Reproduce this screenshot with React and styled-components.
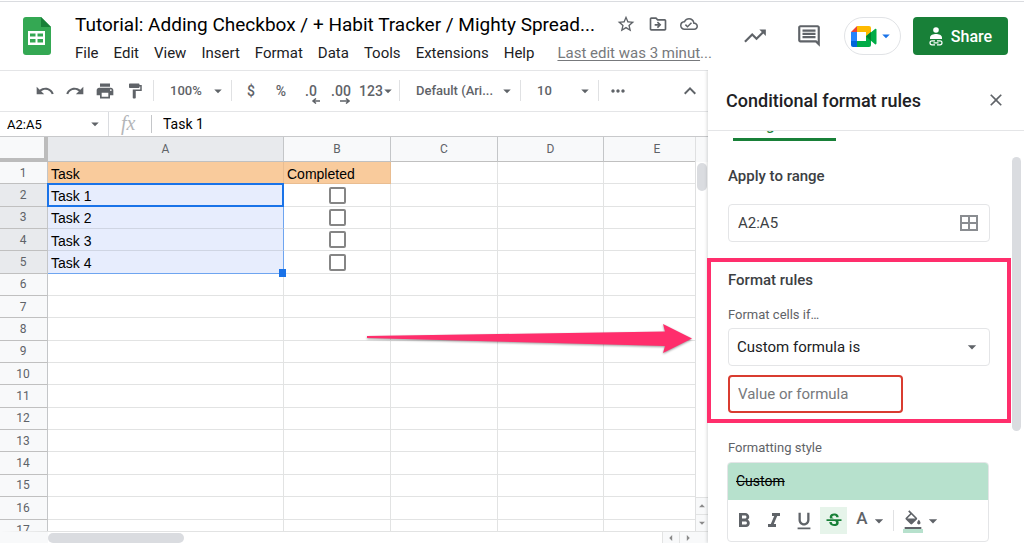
import { useState } from "react";
import styled, { createGlobalStyle } from "styled-components";
import {
  MdArrowDropDown,
  MdArrowDropUp,
  MdArrowLeft,
  MdArrowRight,
  MdClose,
  MdFormatBold,
  MdFormatColorFill,
  MdFormatItalic,
  MdFormatPaint,
  MdFormatUnderlined,
  MdKeyboardArrowUp,
  MdMoreHoriz,
  MdOutlineCloudDone,
  MdOutlineDriveFileMove,
  MdOutlineInsertComment,
  MdPrint,
  MdRedo,
  MdStarOutline,
  MdStrikethroughS,
  MdTrendingUp,
  MdUndo,
} from "react-icons/md";

const menus = [
  "File",
  "Edit",
  "View",
  "Insert",
  "Format",
  "Data",
  "Tools",
  "Extensions",
  "Help",
];

const columns = ["A", "B", "C", "D", "E"];
const rowNumbers = Array.from({ length: 17 }, (_, i) => i + 1);
const labels = { 1: "Task", 2: "Task 1", 3: "Task 2", 4: "Task 3", 5: "Task 4" };

const SheetsLogo = () => (
  <svg width="28" height="38" viewBox="0 0 28 38" aria-hidden="true">
    <path
      d="M3 0h15l10 10v25a3 3 0 0 1-3 3H3a3 3 0 0 1-3-3V3a3 3 0 0 1 3-3z"
      fill="#34a853"
    />
    <path d="M18 0l10 10H18z" fill="#188038" />
    <path
      d="M5 14h17v14H5zM7 16.500v3h5.500v-3zM14.500 16.500v3H20v-3zM7 22v3.500h5.500V22zM14.500 22v3.500H20V22z"
      fill="#fff"
      fillRule="evenodd"
    />
  </svg>
);

const MeetLogo = () => (
  <svg width="26" height="21" viewBox="0 0 26 21" aria-hidden="true">
    <path d="M0 6l6-6v6z" fill="#ea4335" />
    <path d="M0 6h6v9H0z" fill="#2684fc" />
    <path d="M0 15h6v6H2a2 2 0 0 1-2-2z" fill="#0066da" />
    <path d="M6 0h12a2 2 0 0 1 2 2v5l-5 4V6H6z" fill="#ffba00" />
    <path d="M6 15h9v-5l5-4v13a2 2 0 0 1-2 2H6z" fill="#00ac47" />
    <path d="M15 10.500L24 3c.600-.500 1.500-.200 1.500.600v14c0 .800-.900 1.100-1.500.600z" fill="#00ac47" />
    <path d="M15 10.500L20 6.300v8.500z" fill="#00832d" />
  </svg>
);

const ShareIcon = () => (
  <svg width="14" height="19" viewBox="0 0 14 19" aria-hidden="true">
    <circle cx="7" cy="3" r="2.800" fill="#fff" />
    <path d="M1 12v-1.500C1 8 4.500 7 7 7s6 1 6 3.500V12z" fill="#fff" />
    <path
      d="M6 13.800H3a2 2 0 0 0 0 4h3M8 13.800h3a2 2 0 0 1 0 4H8M4.500 15.800h5"
      stroke="#fff"
      strokeWidth="1.200"
      fill="none"
    />
  </svg>
);

const DecimalIcon = ({ more }) => (
  <svg width="18" height="6" viewBox="0 0 18 6" aria-hidden="true">
    <path
      d={more ? "M8 3h9M14 0.500L17 3l-3 2.500" : "M18 3h-7M14 0.500L11 3l3 2.500"}
      stroke="currentColor"
      strokeWidth="1.500"
      fill="none"
    />
  </svg>
);

const RangeIcon = () => (
  <svg width="18" height="16" viewBox="0 0 18 16" aria-hidden="true">
    <path
      d="M1 1h16v14H1zM9 1v14M1 8h16"
      fill="none"
      stroke="#8a8d91"
      strokeWidth="2"
    />
  </svg>
);

const Dropdown = ({ label, value, width }) => (
  <DropdownWrap $width={width}>
    <ToolbarSelect aria-label={label} defaultValue={value}>
      <option>{value}</option>
    </ToolbarSelect>
    <Caret size={18} />
  </DropdownWrap>
);

const Header = () => (
  <HeaderBar>
    <SheetsLogo />
    <HeaderText>
      <TitleRow>
        <Title>Tutorial: Adding Checkbox / + Habit Tracker / Mighty Spread...</Title>
        <TitleActions>
          <IconButton aria-label="Star">
            <MdStarOutline size={20} />
          </IconButton>
          <IconButton aria-label="Move">
            <MdOutlineDriveFileMove size={20} />
          </IconButton>
          <IconButton aria-label="See document status">
            <MdOutlineCloudDone size={18} />
          </IconButton>
        </TitleActions>
      </TitleRow>
      <MenuRow>
        {menus.map((menu) => (
          <MenuButton key={menu}>{menu}</MenuButton>
        ))}
        <LastEdit href="#history">
          <u>Last edit was 3 minut</u>...
        </LastEdit>
      </MenuRow>
    </HeaderText>
    <HeaderActions>
      <IconButton aria-label="Activity dashboard">
        <MdTrendingUp size={26} />
      </IconButton>
      <IconButton aria-label="Open comment history">
        <MdOutlineInsertComment size={26} />
      </IconButton>
      <MeetButton aria-label="Join a call">
        <MeetLogo />
        <MdArrowDropDown size={18} />
      </MeetButton>
      <ShareButton>
        <ShareIcon />
        Share
      </ShareButton>
    </HeaderActions>
  </HeaderBar>
);

const Toolbar = () => (
  <ToolbarRow>
    <ToolButton aria-label="Undo">
      <MdUndo size={20} />
    </ToolButton>
    <ToolButton aria-label="Redo">
      <MdRedo size={20} />
    </ToolButton>
    <ToolButton aria-label="Print">
      <MdPrint size={20} />
    </ToolButton>
    <ToolButton aria-label="Paint format">
      <MdFormatPaint size={18} />
    </ToolButton>
    <Separator />
    <Dropdown label="Zoom" value="100%" width="77px" />
    <Separator />
    <ToolButton>$</ToolButton>
    <ToolButton>%</ToolButton>
    <DecimalButton>
      .0
      <DecimalIcon />
    </DecimalButton>
    <DecimalButton>
      .00
      <DecimalIcon more />
    </DecimalButton>
    <FormatButton>
      123
      <MdArrowDropDown size={18} />
    </FormatButton>
    <Separator />
    <Dropdown label="Font" value="Default (Ari..." width="120px" />
    <Separator />
    <Dropdown label="Font size" value="10" width="77px" />
    <Separator />
    <ToolButton aria-label="More">
      <MdMoreHoriz size={20} />
    </ToolButton>
    <CollapseButton aria-label="Hide the menus">
      <MdKeyboardArrowUp size={24} />
    </CollapseButton>
  </ToolbarRow>
);

const Sheet = () => (
  <SheetTable>
    <colgroup>
      <Col $width="48px" />
      <Col $width="236px" />
      <Col $width="107px" />
      <Col $width="107px" />
      <Col $width="106px" />
      <Col $width="107px" />
    </colgroup>
    <thead>
      <tr>
        <Corner />
        {columns.map((column) => (
          <ColumnHead key={column} $selected={column === "A"} scope="col">
            {column}
          </ColumnHead>
        ))}
      </tr>
    </thead>
    <tbody>
      {rowNumbers.map((row) => {
        const inRange = row >= 2 && row <= 5;
        return (
          <tr key={row}>
            <RowHead $selected={inRange} scope="row">
              {row}
            </RowHead>
            <Cell
              $filled={row === 1}
              $selected={inRange}
              $active={row === 2}
              $last={row === 5}
            >
              {labels[row]}
              {row === 5 && <FillHandle />}
            </Cell>
            <Cell $filled={row === 1} $center={inRange}>
              {row === 1 && "Completed"}
              {inRange && (
                <CellCheckbox
                  type="checkbox"
                  aria-label={`${labels[row]} completed`}
                />
              )}
            </Cell>
            <Cell />
            <Cell />
            <Cell />
          </tr>
        );
      })}
    </tbody>
  </SheetTable>
);

const RulesPanel = () => {
  const [strike, setStrike] = useState(true);

  return (
    <Panel>
      <PanelHeader>
        <PanelTitle>Conditional format rules</PanelTitle>
        <IconButton aria-label="Close">
          <MdClose size={20} />
        </IconButton>
      </PanelHeader>
      <PanelBody>
        <Tab>Single color</Tab>
        <Section>
          <SectionTitle as="label" htmlFor="range">
            Apply to range
          </SectionTitle>
          <Field>
            <FieldInput id="range" defaultValue="A2:A5" />
            <FieldIcon>
              <RangeIcon />
            </FieldIcon>
          </Field>
        </Section>
        <Section>
          <SectionTitle>Format rules</SectionTitle>
          <FieldLabel htmlFor="condition">Format cells if…</FieldLabel>
          <Field>
            <FieldSelect id="condition" defaultValue="Custom formula is">
              <option>Custom formula is</option>
            </FieldSelect>
            <FieldIcon>
              <MdArrowDropDown size={20} />
            </FieldIcon>
          </Field>
          <FormulaInput placeholder="Value or formula" aria-label="Formula" />
        </Section>
        <Section>
          <StyleLabel>Formatting style</StyleLabel>
          <StyleBox>
            <StylePreview $strike={strike}>Custom</StylePreview>
            <StyleTools>
              <StyleButton aria-label="Bold">
                <MdFormatBold size={24} />
              </StyleButton>
              <StyleButton aria-label="Italic">
                <MdFormatItalic size={24} />
              </StyleButton>
              <StyleButton aria-label="Underline">
                <MdFormatUnderlined size={22} />
              </StyleButton>
              <StyleButton
                aria-label="Strikethrough"
                $on={strike}
                onClick={() => setStrike(!strike)}
              >
                <MdStrikethroughS size={20} />
              </StyleButton>
              <ColorButton aria-label="Text color">
                <ColorLetter>A</ColorLetter>
                <MdArrowDropDown size={20} />
              </ColorButton>
              <Separator />
              <ColorButton aria-label="Fill color">
                <FillSwatch>
                  <MdFormatColorFill size={20} viewBox="0 0 24 21" />
                </FillSwatch>
                <MdArrowDropDown size={20} />
              </ColorButton>
            </StyleTools>
          </StyleBox>
        </Section>
        <PanelThumb />
      </PanelBody>
    </Panel>
  );
};

const App = () => (
  <>
    <GlobalStyle />
    <Page>
      <Header />
      <Workspace>
        <Editor>
          <Toolbar />
          <FormulaBar>
            <NameBox>
              <NameInput aria-label="Name box" defaultValue="A2:A5" />
              <Caret size={18} />
            </NameBox>
            <Fx>fx</Fx>
            <ContentInput aria-label="Cell content" defaultValue="Task 1" />
          </FormulaBar>
          <SheetArea>
            <SheetViewport>
              <Sheet />
            </SheetViewport>
            <VerticalBar>
              <VerticalThumb />
              <ScrollButton aria-label="Scroll up">
                <MdArrowDropUp size={14} />
              </ScrollButton>
              <ScrollButton aria-label="Scroll down">
                <MdArrowDropDown size={14} />
              </ScrollButton>
            </VerticalBar>
            <HorizontalBar>
              <HorizontalThumb />
              <SideButton aria-label="Scroll left">
                <MdArrowLeft size={14} />
              </SideButton>
              <SideButton aria-label="Scroll right">
                <MdArrowRight size={14} />
              </SideButton>
            </HorizontalBar>
            <BarCorner />
          </SheetArea>
        </Editor>
        <RulesPanel />
        <Highlight />
        <Arrow width="326" height="32" viewBox="0 0 326 32" aria-hidden="true">
          <path
            d="M0 13L298 8.500 296 1l29 14.500L296 30l2-7L0 15z"
            fill="#ff2e6c"
          />
        </Arrow>
      </Workspace>
    </Page>
  </>
);

export default App;

const GlobalStyle = createGlobalStyle`
  * {
    box-sizing: border-box;
  }

  body {
    margin: 0;
    background: #fff;
    color: #202124;
    font-family: Roboto, sans-serif;
    overflow: hidden;
  }

  button,
  input,
  select {
    margin: 0;
    padding: 0;
    border: none;
    border-radius: 0;
    background: none;
    color: inherit;
    font-family: inherit;
    outline: none;
  }

  button {
    cursor: pointer;
  }

  svg {
    display: block;
    flex: none;
  }
`;

const Page = styled.div`
  display: flex;
  flex-direction: column;
  height: 100vh;
`;

// Header
const HeaderBar = styled.header`
  display: flex;
  align-items: flex-start;
  height: 70px;
  flex: none;
  padding: 15px 16px 0 23px;
  border-top: 1px solid #dadce0;
  border-bottom: 1px solid #e4e5e7;
  margin-top: 1px;
  margin-bottom: -1px;
`;

const HeaderText = styled.div`
  flex: 1;
  min-width: 0;
  margin: -7px 0 0 24px;
`;

const TitleRow = styled.div`
  display: flex;
  align-items: center;
  height: 28px;
  gap: 21px;
`;

const Title = styled.h1`
  margin: 0;
  font-size: 19px;
  font-weight: 400;
  color: #000;
  white-space: nowrap;
`;

const TitleActions = styled.div`
  display: flex;
  gap: 12px;
`;

const IconButton = styled.button`
  display: flex;
  align-items: center;
  color: #5f6368;
`;

const MenuRow = styled.nav`
  display: flex;
  align-items: center;
  height: 30px;
  gap: 15px;
`;

const MenuButton = styled.button`
  font-size: 15px;
  color: #202124;
`;

const LastEdit = styled.a`
  margin-left: 8px;
  font-size: 15px;
  color: #77797c;
  text-decoration: none;
  white-space: nowrap;

  u {
    text-underline-offset: 2px;
  }
`;

const HeaderActions = styled.div`
  display: flex;
  align-items: center;
  height: 38px;

  ${IconButton} + ${IconButton} {
    margin-left: 28px;
  }
`;

const MeetButton = styled.button`
  display: flex;
  align-items: center;
  justify-content: center;
  width: 57px;
  height: 38px;
  margin: 0 12px 0 22px;
  border: 1px solid #e1e3e6;
  border-radius: 19px;
  color: #1a73e8;
`;

const ShareButton = styled.button`
  display: flex;
  align-items: center;
  justify-content: center;
  gap: 8px;
  width: 95px;
  height: 38px;
  border-radius: 4px;
  background: #188038;
  color: #fff;
  font-size: 16px;
  font-weight: 500;
`;

// Workspace
const Workspace = styled.main`
  position: relative;
  display: flex;
  flex: 1;
  min-height: 0;
`;

const Editor = styled.div`
  display: flex;
  flex-direction: column;
  flex: 1;
  min-width: 0;
`;

const ToolbarRow = styled.div`
  display: flex;
  align-items: center;
  flex: none;
  height: 42px;
  padding: 0 6px 0 30px;
  border-bottom: 1px solid #e4e5e7;
  color: #5f6368;
`;

const ToolButton = styled.button`
  display: flex;
  align-items: center;
  justify-content: center;
  width: 30px;
  height: 28px;
  font-size: 14px;
  font-weight: 500;
`;

const DecimalButton = styled(ToolButton)`
  flex-direction: column;
  line-height: 14px;
  padding-top: 6px;
`;

const FormatButton = styled(ToolButton)`
  width: 40px;

  svg {
    margin: 0 -4px;
  }
`;

const CollapseButton = styled(ToolButton)`
  margin-left: auto;
  width: 24px;
`;

const Separator = styled.span`
  width: 1px;
  height: 21px;
  margin: 0 4px 0 3px;
  background: #e0e1e3;
`;

const DropdownWrap = styled.div`
  position: relative;
  width: ${(props) => props.$width};
  margin: 0 -3px 0 -4px;
`;

const ToolbarSelect = styled.select`
  width: 100%;
  height: 28px;
  padding-left: 16px;
  appearance: none;
  font-size: 13px;
  font-weight: 500;
`;

const Caret = styled(MdArrowDropDown)`
  position: absolute;
  right: 4px;
  top: 50%;
  margin-top: -9px;
  color: #5f6368;
  pointer-events: none;
`;

// Formula bar
const FormulaBar = styled.div`
  display: flex;
  align-items: center;
  flex: none;
  height: 25px;
  border-bottom: 1px solid #c8c9cb;
`;

const NameBox = styled.div`
  position: relative;
  width: 109px;
  height: 24px;
  border-right: 1px solid #dadce0;
`;

const NameInput = styled.input`
  width: 100%;
  height: 24px;
  padding-left: 7px;
  font-size: 13px;
  color: #000;
`;

const Fx = styled.span`
  width: 43px;
  height: 18px;
  padding-left: 12px;
  border-right: 1px solid #c4c6c9;
  font-family: "Liberation Serif", serif;
  font-size: 20px;
  line-height: 16px;
  font-style: italic;
  color: #b4b6b9;
`;

const ContentInput = styled.input`
  flex: 1;
  min-width: 0;
  height: 24px;
  padding-left: 11px;
  font-size: 14px;
  color: #000;
`;

// Sheet
const SheetArea = styled.div`
  display: grid;
  grid-template-columns: 1fr 12px;
  grid-template-rows: 1fr 12px;
  flex: 1;
  min-height: 0;
`;

const SheetViewport = styled.div`
  overflow: hidden;
  min-width: 0;
  min-height: 0;
  border-right: 1px solid #dfe0e1;
`;

const SheetTable = styled.table`
  width: 711px;
  height: 405px;
  table-layout: fixed;
  border-collapse: separate;
  border-spacing: 0;
`;

const Col = styled.col`
  width: ${(props) => props.$width};
`;

const HeadCell = styled.th`
  padding: 0;
  border-right: 1px solid #c4c6c8;
  border-bottom: 1px solid #c0c0c0;
  background: ${(props) => (props.$selected ? "#e8eaed" : "#f8f9fa")};
  color: #5f6368;
  font-size: 12px;
  line-height: 14px;
  font-weight: 400;
`;

const Corner = styled.td`
  height: 25px;
  padding: 0;
  border-right: 4px solid #bcbcbc;
  border-bottom: 4px solid #bcbcbc;
  background: #f8f9fa;
`;

const ColumnHead = styled(HeadCell)`
  height: 25px;
`;

const RowHead = styled(HeadCell)`
  height: 22px;
  padding-right: 1px;
`;

const Cell = styled.td`
  position: relative;
  height: 22px;
  padding: 2px 3px 0;
  border-right: 1px solid #e2e3e3;
  border-bottom: 1px solid #e2e3e3;
  font-family: "Liberation Sans", Arial, sans-serif;
  font-size: 14px;
  line-height: 16px;
  color: #000;
  ${(props) =>
    props.$filled &&
    `
      background: #f9cb9c;
      border-color: #e9bd91;
    `}
  ${(props) =>
    props.$selected &&
    `
      background: #e7edfd;
      border-right-color: #6ea5f0;
      border-bottom-color: #cfd5e3;
    `}
  ${(props) => props.$last && "border-bottom-color: #6ea5f0;"}
  ${(props) => props.$center && "padding: 0;"}
  ${(props) =>
    props.$active &&
    `
      &::after {
        content: "";
        position: absolute;
        inset: -1px -1px -1px -1px;
        border: 2px solid #1a73e8;
      }
    `}
`;

const FillHandle = styled.span`
  position: absolute;
  right: -3px;
  bottom: -4px;
  z-index: 1;
  width: 7px;
  height: 8px;
  background: #1a73e8;
`;

const CellCheckbox = styled.input`
  display: block;
  width: 17px;
  height: 17px;
  margin: 0 auto;
  appearance: none;
  border: 2px solid #858585;
  border-radius: 2px;

  &:checked {
    background: #858585;
  }
`;

// Scroll bars
const VerticalBar = styled.div`
  display: flex;
  flex-direction: column;
  border-top: 25px solid #f8f9fa;
`;

const VerticalThumb = styled.div`
  width: 10px;
  height: 28px;
  margin: 1px 1px auto;
  border-radius: 5px;
  background: #dadce0;
`;

const ScrollButton = styled.button`
  display: flex;
  align-items: center;
  justify-content: center;
  height: 17px;
  border-top: 1px solid #e2e3e3;
  background: #f8f9fa;
  color: #8a8a8a;
`;

const HorizontalBar = styled.div`
  display: flex;
  border-top: 1px solid #e2e3e3;
  border-left: 48px solid #f8f9fa;
`;

const HorizontalThumb = styled.div`
  width: 136px;
  height: 10px;
  margin: 1px auto 0 0;
  border-radius: 5px;
  background: #dadce0;
`;

const SideButton = styled(ScrollButton)`
  width: 17px;
  height: 11px;
  border-top: none;
  border-left: 1px solid #e2e3e3;
`;

const BarCorner = styled.div`
  background: #f8f9fa;
  border-top: 1px solid #e2e3e3;
`;

// Side panel
const Panel = styled.aside`
  position: relative;
  display: flex;
  flex-direction: column;
  flex: none;
  width: 316px;
  background: #fff;
  box-shadow: -1px 0 3px rgba(60, 64, 67, 0.2);
  clip-path: inset(0 0 0 -6px);
`;

const PanelHeader = styled.div`
  display: flex;
  align-items: center;
  justify-content: space-between;
  flex: none;
  height: 61px;
  padding: 0 18px;
  border-bottom: 1px solid #e4e5e7;
`;

const PanelTitle = styled.h2`
  margin: 0;
  font-size: 18px;
  font-weight: 500;
`;

const PanelBody = styled.div`
  position: relative;
  flex: 1;
  min-height: 0;
  overflow: hidden;
  padding: 0 34px 0 20px;
`;

const Tab = styled.button`
  display: block;
  width: 103px;
  height: 32px;
  margin: -22px 0 0 5px;
  padding-top: 2px;
  border-bottom: 3px solid #188038;
  color: #188038;
  font-size: 15px;
  font-weight: 500;
`;

const Section = styled.section`
  display: flex;
  flex-direction: column;
  margin-bottom: 28px;
`;

const SectionTitle = styled.h3`
  margin: 0;
  font-size: 15px;
  line-height: 20px;
  font-weight: 500;
  color: #3c4043;

  ${Tab} + ${Section} & {
    margin: 25px 0 18px;
  }
`;

const Field = styled.div`
  position: relative;
  height: 38px;
`;

const FieldInput = styled.input`
  width: 100%;
  height: 38px;
  padding: 0 9px;
  border: 1px solid #e4e5e7;
  border-radius: 4px;
  font-size: 15px;
  color: #3c4043;
`;

const FieldSelect = styled(FieldInput).attrs({ as: "select" })`
  padding: 0 8px;
  appearance: none;
  color: #202124;
`;

const FieldIcon = styled.span`
  position: absolute;
  right: 12px;
  top: 0;
  display: flex;
  align-items: center;
  height: 38px;
  color: #5f6368;
  pointer-events: none;

  ${FieldSelect} + & {
    right: 8px;
  }
`;

const FieldLabel = styled.label`
  margin: 16px 0 5px;
  font-size: 13px;
  line-height: 17px;
  color: #5f6368;
`;

const FormulaInput = styled(FieldInput)`
  width: 175px;
  margin-top: 9px;
  padding: 0 8px;
  border: 2px solid #d93c30;

  &::placeholder {
    color: #77797c;
    opacity: 1;
  }
`;

const StyleLabel = styled.span`
  margin: -2px 0 6px;
  font-size: 13px;
  line-height: 17px;
  color: #5f6368;
`;

const StyleBox = styled.div`
  margin: 0 1px 0 -1px;
  border: 1px solid #e4e5e7;
  border-radius: 4px;
  overflow: hidden;
`;

const StylePreview = styled.div`
  height: 37px;
  padding-left: 8px;
  background: #b7e1cd;
  color: #000;
  font-size: 14px;
  line-height: 37px;
  text-decoration: ${(props) => (props.$strike ? "line-through" : "none")};
`;

const StyleTools = styled.div`
  display: flex;
  align-items: center;
  height: 41px;
  padding-left: 2px;
  color: #5f6368;
`;

const StyleButton = styled.button`
  display: flex;
  align-items: center;
  justify-content: center;
  width: 27px;
  height: 27px;
  margin-right: 3px;
  background: ${(props) => (props.$on ? "#e6f4ea" : "none")};
  color: ${(props) => (props.$on ? "#188038" : "inherit")};
`;

const ColorButton = styled.button`
  display: flex;
  align-items: center;
  width: 40px;
  height: 27px;
  padding-left: 5px;
`;

const ColorLetter = styled.span`
  width: 14px;
  margin-bottom: 5px;
  font-size: 17px;
  font-weight: 500;
`;

const FillSwatch = styled.span`
  border-bottom: 4px solid #b7e1cd;
`;

const PanelThumb = styled.div`
  position: absolute;
  top: 26px;
  right: 3px;
  width: 9px;
  height: 274px;
  border-radius: 5px;
  background: #dadce0;
`;

// Annotations over the page
const Highlight = styled.div`
  position: absolute;
  top: 188px;
  right: 13px;
  width: 304px;
  height: 165px;
  border: 4px solid #ff2e6c;
  pointer-events: none;
`;

const Arrow = styled.svg`
  position: absolute;
  top: 253px;
  right: 331px;
  filter: drop-shadow(0 1px 1px rgba(0, 0, 0, 0.4));
  pointer-events: none;
`;
